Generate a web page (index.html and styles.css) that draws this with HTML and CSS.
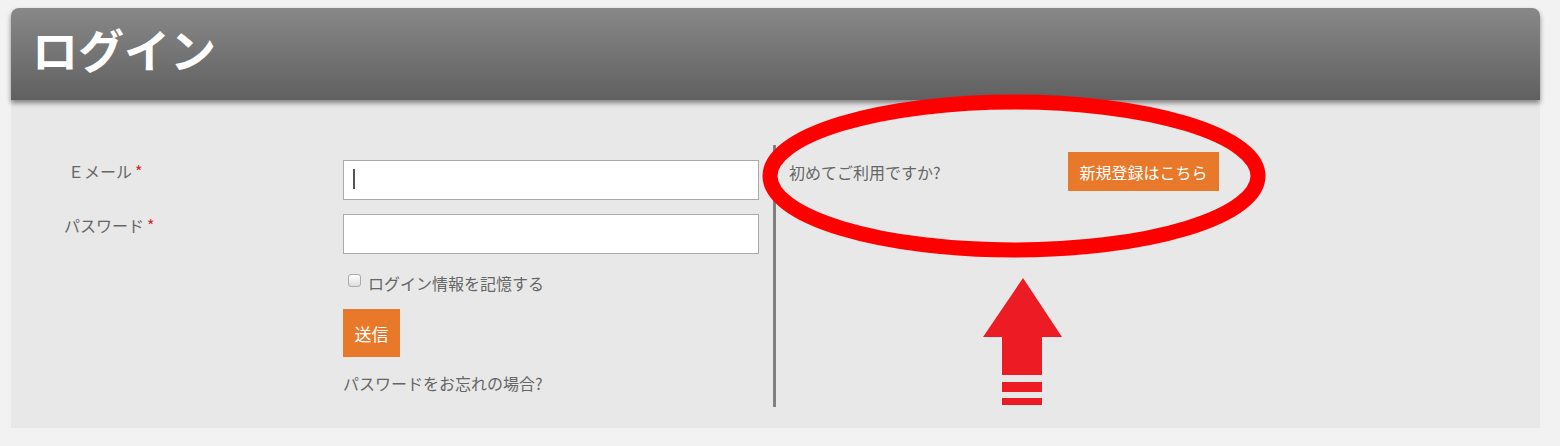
FILE: index.html
```html
<!DOCTYPE html>
<html lang="ja">

<head>
    <meta charset="UTF-8">
    <meta name="viewport" content="width=device-width, initial-scale=1.0">
    <title>ログイン</title>
    <link rel="stylesheet" href="styles.css">
</head>

<body>
    <div class="login">
        <!-- 見出し -->
        <div class="login-head">
            <h1>ログイン</h1>
        </div>

        <div class="login-body">
            <!-- 左：ログインフォーム -->
            <form class="login-form">
                <div class="form-row">
                    <label class="form-label">Ｅメール<span class="req">*</span></label>
                    <div class="form-field">
                        <div class="form-input"><span class="caret"></span></div>
                    </div>
                </div>
                <div class="form-row">
                    <label class="form-label">パスワード<span class="req">*</span></label>
                    <div class="form-field">
                        <div class="form-input"></div>
                    </div>
                </div>
                <div class="form-extra">
                    <label class="remember"><span class="check"></span>ログイン情報を記憶する</label>
                    <button type="button" class="btn btn-submit">送信</button>
                    <a class="forgot">パスワードをお忘れの場合?</a>
                </div>
            </form>

            <!-- 右：新規登録 -->
            <div class="register">
                <div class="register-row">
                    <span class="register-text">初めてご利用ですか?</span>
                    <button type="button" class="btn btn-register">新規登録はこちら</button>
                </div>
            </div>
        </div>

        <!-- 注釈（赤丸と矢印） -->
        <svg class="marks" width="1529" height="420" viewBox="0 0 1529 420">
            <ellipse cx="1003" cy="168" rx="244" ry="74" fill="none" stroke="#ff0000" stroke-width="15" />
            <polygon points="1012,270 1051,329 1031,329 1031,367 991,367 991,329 972,329" fill="#ed1c24" />
            <rect x="991" y="374" width="40" height="10" fill="#ed1c24" />
            <rect x="991" y="390" width="40" height="7" fill="#ed1c24" />
        </svg>
    </div>
</body>

</html>
```

FILE: styles.css
```css
/* 基本 */
* {
    margin: 0;
    padding: 0;
    box-sizing: border-box;
}

body {
    background: #f2f2f2;
    font-family: "Noto Sans CJK JP", "Liberation Sans", sans-serif;
    color: #666;
    font-size: 16px;
}

.login {
    position: relative;
    width: 1529px;
    margin: 8px 0 0 11px;
}

/* 見出し */
.login-head {
    height: 92px;
    border-radius: 8px 8px 0 0;
    background: linear-gradient(#888888, #606060);
    box-shadow: 0 3px 5px rgba(0, 0, 0, 0.45);
    position: relative;
    z-index: 1;
    padding: 9px 0 0 21px;
}

.login-head h1 {
    color: #fff;
    font-size: 46px;
    font-weight: bold;
    line-height: 62px;
}

/* 本体 */
.login-body {
    height: 328px;
    background: #e8e8e8;
    display: flex;
}

.login-form {
    width: 762px;
    padding: 60px 0 0 53px;
}

.form-row {
    display: flex;
    margin-bottom: 14px;
}

.form-label {
    width: 279px;
    line-height: 22px;
}

.form-row:first-child .form-label {
    padding-left: 4px;
}

.req {
    color: #d9232d;
    margin-left: 3px;
}

.form-input {
    width: 416px;
    height: 40px;
    background: #fff;
    border: 1px solid #aaa;
    position: relative;
}

.caret {
    position: absolute;
    left: 9px;
    top: 8px;
    width: 2px;
    height: 20px;
    background: #555;
}

.form-extra {
    padding-left: 279px;
    display: flex;
    flex-direction: column;
    align-items: flex-start;
}

.remember {
    display: flex;
    align-items: center;
    line-height: 22px;
    margin-top: 4px;
}

.check {
    width: 13px;
    height: 13px;
    border: 1px solid #aaa;
    border-radius: 3px;
    background: linear-gradient(#fff, #ddd);
    margin: 0 7px 5px 5px;
}

.btn {
    border: none;
    background: #e8792a;
    color: #fff;
    font-family: inherit;
    font-size: 16px;
}

.btn-submit {
    width: 57px;
    height: 48px;
    margin-top: 15px;
    font-size: 17px;
}

.forgot {
    margin-top: 15px;
    line-height: 22px;
}

/* 新規登録 */
.register {
    margin-top: 45px;
    height: 262px;
    border-left: 3px solid #808080;
    padding: 7px 0 0 13px;
}

.register-row {
    display: flex;
    align-items: center;
}

.register-text {
    width: 279px;
}

.btn-register {
    width: 151px;
    height: 39px;
}

/* 注釈 */
.marks {
    position: absolute;
    left: 0;
    top: 0;
    z-index: 2;
}
```
